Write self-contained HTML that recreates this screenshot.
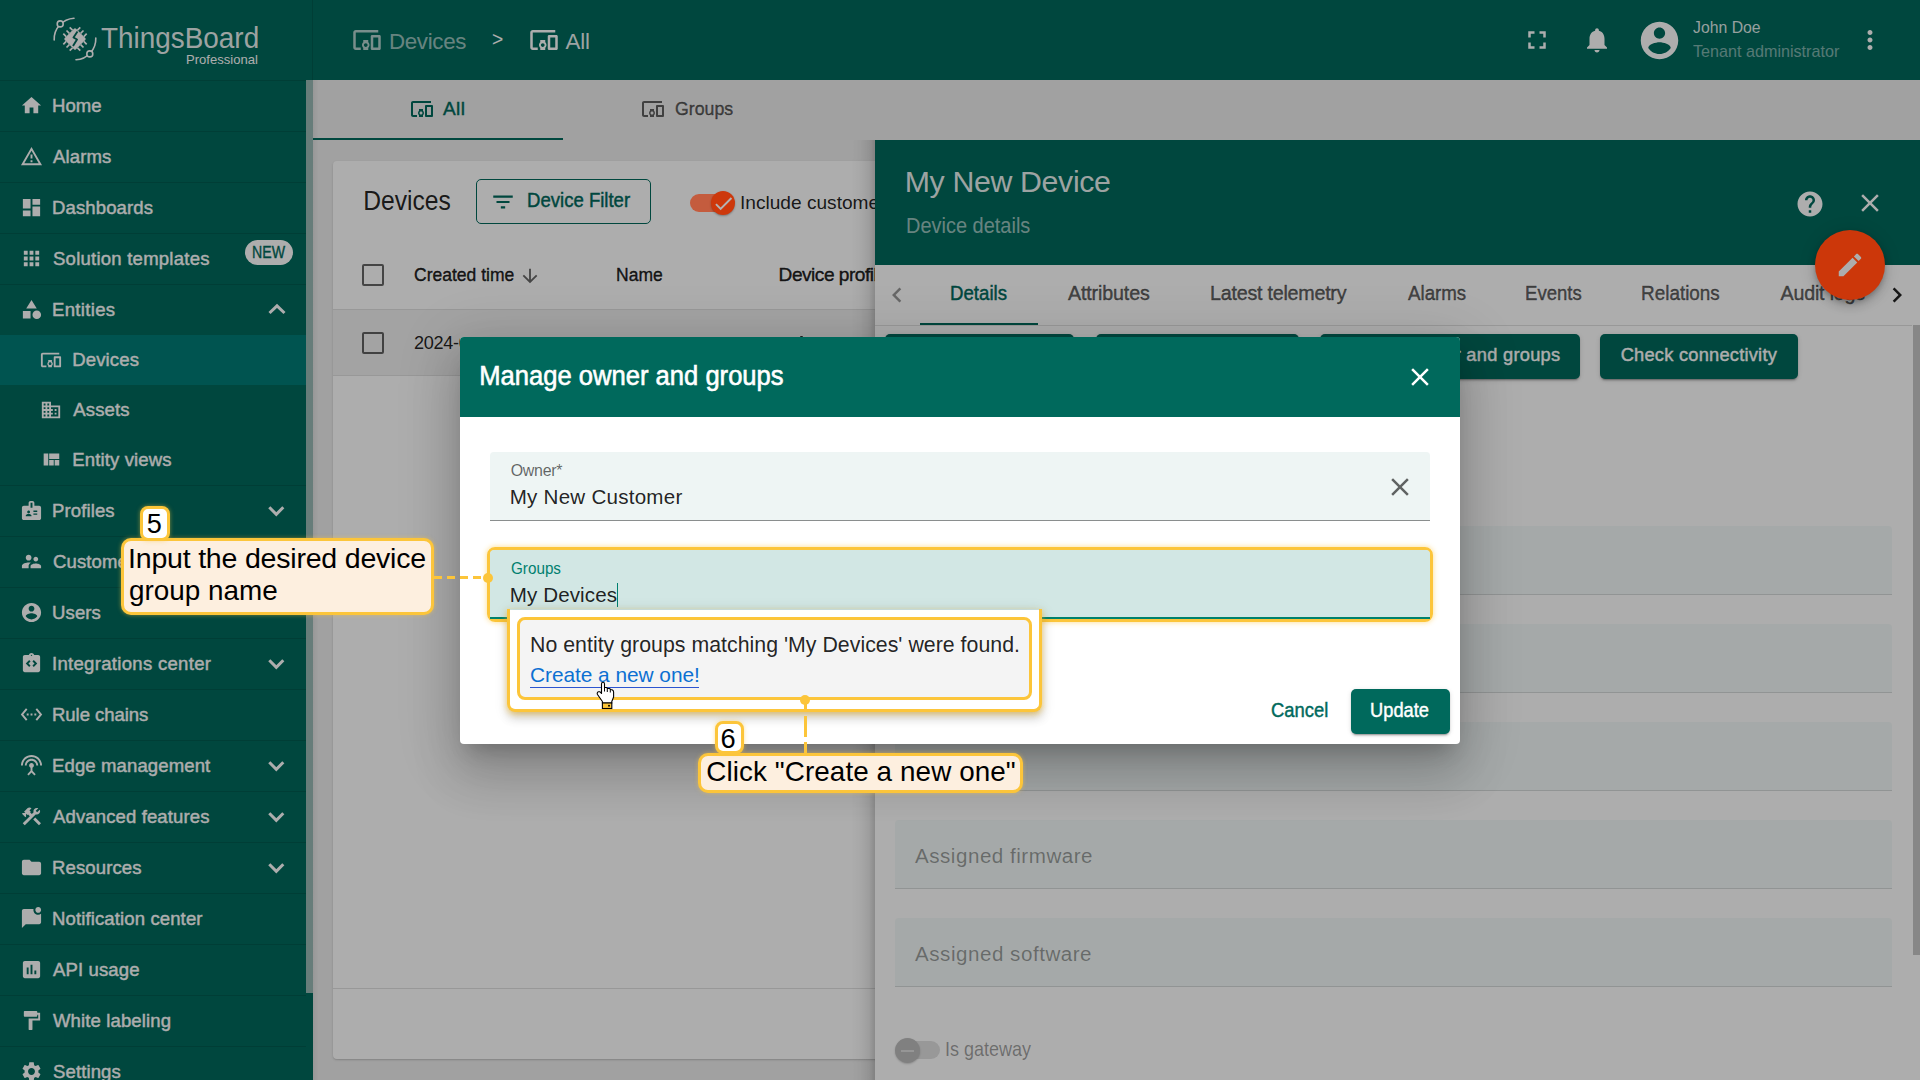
<!DOCTYPE html>
<html><head><meta charset="utf-8">
<style>
*{box-sizing:border-box;margin:0;padding:0}
html,body{width:1920px;height:1080px;overflow:hidden;background:#eeeeee;font-family:"Liberation Sans",sans-serif;position:relative}
.a{position:absolute}
svg{position:absolute;display:block;overflow:visible}
.t{position:absolute;white-space:nowrap;line-height:1}
</style></head><body>
<div class="a" style="left:0px;top:0px;width:1920px;height:80px;background:#00695c"></div>
<svg style="left:0;top:0;width:120px;height:80px" viewBox="0 0 120 80">
<g fill="none" stroke="#fff" stroke-width="1.6" stroke-linecap="round">
<path d="M54.2 40 A21 21 0 0 1 74 18.2"/>
<path d="M95.8 38 A21 21 0 0 1 76 59.8"/>
<circle cx="60.2" cy="23.9" r="3" fill="#00695c"/><circle cx="89.8" cy="53.9" r="3" fill="#00695c"/>
</g>
<g transform="rotate(45 75 39)">
<rect x="67" y="31" width="16" height="16" rx="1.5" fill="#fff"/>
<g stroke="#fff" stroke-width="1.7"><path d="M70.5 27v4M75 27v4M79.5 27v4M70.5 47v4M75 47v4M79.5 47v4M63 34.5h4M63 39h4M63 43.5h4M83 34.5h4M83 39h4M83 43.5h4"/></g>
</g>
<path d="M77.5 31.5 L73.5 37.5 L77 39.5 L73 46" stroke="#00695c" stroke-width="1.9" fill="none" stroke-linejoin="round"/>
</svg>
<div class="t" style="left:101.00px;top:23.66px;font-size:28.99px;color:rgba(255,255,255,0.92);font-weight:400;letter-spacing:0.000px;transform:scaleX(0.9624);transform-origin:0.00px 0;">ThingsBoard</div>
<div class="t" style="left:186.00px;top:52.66px;font-size:13.04px;color:#ffffff;font-weight:400;letter-spacing:0.017px;">Professional</div>
<svg style="left:352.00px;top:25.20px;width:30px;height:30px;" viewBox="0 0 24 24"><path fill="rgba(255,255,255,0.7)" d="M3 6h18V4H3c-1.1 0-2 .9-2 2v12c0 1.1.9 2 2 2h4v-2H3V6zm10 6H9v1.78c-.61.55-1 1.33-1 2.22s.39 1.67 1 2.22V20h4v-1.78c.61-.55 1-1.34 1-2.22s-.39-1.67-1-2.22V12zm-2 5.5c-.83 0-1.5-.67-1.5-1.5s.67-1.5 1.5-1.5 1.5.67 1.5 1.5-.67 1.5-1.5 1.5zM22 8h-6c-.5 0-1 .5-1 1v10c0 .5.5 1 1 1h6c.5 0 1-.5 1-1V9c0-.5-.5-1-1-1zm-1 10h-4v-8h4v8z"/></svg>
<div class="t" style="left:389.00px;top:31.41px;font-size:22.32px;color:rgba(255,255,255,0.62);font-weight:400;letter-spacing:-0.326px;">Devices</div>
<div class="t" style="left:492.40px;top:28.41px;font-size:21.01px;color:#ffffff;font-weight:400;letter-spacing:0.000px;transform:scaleX(0.9182);transform-origin:1.00px 0;">&gt;</div>
<svg style="left:529.00px;top:25.20px;width:30px;height:30px;" viewBox="0 0 24 24"><path fill="#ffffff" d="M3 6h18V4H3c-1.1 0-2 .9-2 2v12c0 1.1.9 2 2 2h4v-2H3V6zm10 6H9v1.78c-.61.55-1 1.33-1 2.22s.39 1.67 1 2.22V20h4v-1.78c.61-.55 1-1.34 1-2.22s-.39-1.67-1-2.22V12zm-2 5.5c-.83 0-1.5-.67-1.5-1.5s.67-1.5 1.5-1.5 1.5.67 1.5 1.5-.67 1.5-1.5 1.5zM22 8h-6c-.5 0-1 .5-1 1v10c0 .5.5 1 1 1h6c.5 0 1-.5 1-1V9c0-.5-.5-1-1-1zm-1 10h-4v-8h4v8z"/></svg>
<div class="t" style="left:565.40px;top:31.41px;font-size:22.32px;color:rgba(255,255,255,0.92);font-weight:400;letter-spacing:-0.063px;">All</div>
<svg style="left:1522.00px;top:25.00px;width:30px;height:30px;" viewBox="0 0 24 24"><path fill="#ffffff" d="M7 14H5v5h5v-2H7v-3zm-2-4h2V7h3V5H5v5zm12 7h-3v2h5v-5h-2v3zM14 5v2h3v3h2V5h-5z"/></svg>
<svg style="left:1582.00px;top:25.00px;width:30px;height:30px;" viewBox="0 0 24 24"><path fill="#ffffff" d="M12 22c1.1 0 2-.9 2-2h-4c0 1.1.89 2 2 2zm6-6v-5c0-3.07-1.64-5.64-4.5-6.32V4c0-.83-.67-1.5-1.5-1.5s-1.5.67-1.5 1.5v.68C7.63 5.36 6 7.92 6 11v5l-2 2v1h16v-1l-2-2z"/></svg>
<svg style="left:1637.00px;top:18.00px;width:45px;height:45px;" viewBox="0 0 24 24"><path fill="#ffffff" d="M12 2C6.48 2 2 6.48 2 12s4.48 10 10 10 10-4.48 10-10S17.52 2 12 2zm0 3c1.66 0 3 1.34 3 3s-1.34 3-3 3-3-1.34-3-3 1.34-3 3-3zm0 14.2c-2.5 0-4.71-1.28-6-3.22.03-1.99 4-3.08 6-3.08 1.99 0 5.97 1.09 6 3.08-1.29 1.94-3.5 3.22-6 3.22z"/></svg>
<div class="t" style="left:1693.00px;top:18.98px;font-size:17.39px;color:rgba(255,255,255,0.88);font-weight:400;letter-spacing:0.000px;transform:scaleX(0.9089);transform-origin:0.00px 0;">John Doe</div>
<div class="t" style="left:1693.00px;top:42.98px;font-size:17.39px;color:rgba(255,255,255,0.5);font-weight:400;letter-spacing:0.000px;transform:scaleX(0.9294);transform-origin:0.00px 0;">Tenant administrator</div>
<svg style="left:1855.00px;top:25.00px;width:30px;height:30px;" viewBox="0 0 24 24"><path fill="#ffffff" d="M12 8c1.1 0 2-.9 2-2s-.9-2-2-2-2 .9-2 2 .9 2 2 2zm0 2c-1.1 0-2 .9-2 2s.9 2 2 2 2-.9 2-2-.9-2-2-2zm0 6c-1.1 0-2 .9-2 2s.9 2 2 2 2-.9 2-2-.9-2-2-2z"/></svg>
<div class="a" style="left:0px;top:80px;width:313px;height:1000px;background:#00695c"></div>
<div class="a" style="left:306px;top:80px;width:7px;height:913px;background:#99b8b4"></div>
<div class="a" style="left:0px;top:80px;width:306px;height:1px;background:rgba(0,0,0,0.12)"></div>
<div class="a" style="left:312px;top:0px;width:1px;height:80px;background:rgba(0,0,0,0.12)"></div>
<svg style="left:19.50px;top:94.00px;width:23px;height:23px;" viewBox="0 0 24 24"><path fill="#ffffff" d="M10 20v-6h4v6h5v-8h3L12 3 2 12h3v8z"/></svg>
<div class="t" style="left:52.00px;top:96.90px;font-size:18.55px;color:#ffffff;font-weight:400;letter-spacing:0.014px;-webkit-text-stroke:0.41px #ffffff;">Home</div>
<div class="a" style="left:0px;top:131px;width:306px;height:1px;background:rgba(0,0,0,0.12)"></div>
<svg style="left:19.50px;top:145.00px;width:23px;height:23px;" viewBox="0 0 24 24"><path fill="#ffffff" d="M12 5.99L19.53 19H4.47L12 5.99M12 2L1 21h22L12 2zm1 14h-2v2h2v-2zm0-6h-2v4h2v-4z"/></svg>
<div class="t" style="left:53.00px;top:147.90px;font-size:18.55px;color:#ffffff;font-weight:400;letter-spacing:0.114px;-webkit-text-stroke:0.41px #ffffff;">Alarms</div>
<div class="a" style="left:0px;top:182px;width:306px;height:1px;background:rgba(0,0,0,0.12)"></div>
<svg style="left:19.50px;top:196.00px;width:23px;height:23px;" viewBox="0 0 24 24"><path fill="#ffffff" d="M3 13h8V3H3v10zm0 8h8v-6H3v6zm10 0h8V11h-8v10zm0-18v6h8V3h-8z"/></svg>
<div class="t" style="left:52.00px;top:198.90px;font-size:18.55px;color:#ffffff;font-weight:400;letter-spacing:0.120px;-webkit-text-stroke:0.41px #ffffff;">Dashboards</div>
<div class="a" style="left:0px;top:233px;width:306px;height:1px;background:rgba(0,0,0,0.12)"></div>
<svg style="left:19.50px;top:247.00px;width:23px;height:23px;" viewBox="0 0 24 24"><path fill="#ffffff" d="M4 8h4V4H4v4zm6 12h4v-4h-4v4zm-6 0h4v-4H4v4zm0-6h4v-4H4v4zm6 0h4v-4h-4v4zm6-10v4h4V4h-4zm-6 4h4V4h-4v4zm6 6h4v-4h-4v4zm0 6h4v-4h-4v4z"/></svg>
<div class="t" style="left:53.00px;top:249.90px;font-size:18.55px;color:#ffffff;font-weight:400;letter-spacing:0.235px;-webkit-text-stroke:0.41px #ffffff;">Solution templates</div>
<div class="a" style="left:0px;top:284px;width:306px;height:1px;background:rgba(0,0,0,0.12)"></div>
<svg style="left:19.50px;top:298.00px;width:23px;height:23px;" viewBox="0 0 24 24"><path fill="#ffffff" d="M12 2l-5.5 9h11zM17.5 13a4.5 4.5 0 1 0 0 9a4.5 4.5 0 1 0 0-9zM3 13.5h8v8H3z"/></svg>
<div class="t" style="left:52.00px;top:300.90px;font-size:18.55px;color:#ffffff;font-weight:400;letter-spacing:0.336px;-webkit-text-stroke:0.41px #ffffff;">Entities</div>
<svg style="left:260px;top:284px;width:40px;height:50px" viewBox="0 0 40 50"><polyline points="9.5,29 17,21.8 24.5,29" fill="none" stroke="#fff" stroke-width="3"/></svg>
<div class="a" style="left:245px;top:240px;width:48px;height:25px;border-radius:12.5px;background:#fff"></div>
<div class="t" style="left:251.50px;top:244.51px;font-size:15.94px;color:#00695c;font-weight:400;letter-spacing:0.000px;transform:scaleX(0.8855);transform-origin:1.00px 0;-webkit-text-stroke:0.35px #00695c;">NEW</div>
<div class="a" style="left:0px;top:335px;width:306px;height:50px;background:#007c76"></div>
<svg style="left:40.00px;top:349.00px;width:22px;height:22px;" viewBox="0 0 24 24"><path fill="#ffffff" d="M3 6h18V4H3c-1.1 0-2 .9-2 2v12c0 1.1.9 2 2 2h4v-2H3V6zm10 6H9v1.78c-.61.55-1 1.33-1 2.22s.39 1.67 1 2.22V20h4v-1.78c.61-.55 1-1.34 1-2.22s-.39-1.67-1-2.22V12zm-2 5.5c-.83 0-1.5-.67-1.5-1.5s.67-1.5 1.5-1.5 1.5.67 1.5 1.5-.67 1.5-1.5 1.5zM22 8h-6c-.5 0-1 .5-1 1v10c0 .5.5 1 1 1h6c.5 0 1-.5 1-1V9c0-.5-.5-1-1-1zm-1 10h-4v-8h4v8z"/></svg>
<div class="t" style="left:72.30px;top:351.00px;font-size:18.55px;color:#ffffff;font-weight:400;letter-spacing:0.120px;-webkit-text-stroke:0.41px #ffffff;">Devices</div>
<svg style="left:40.00px;top:399.00px;width:22px;height:22px;" viewBox="0 0 24 24"><path fill="#ffffff" d="M12 7V3H2v18h20V7H12zM6 19H4v-2h2v2zm0-4H4v-2h2v2zm0-4H4V9h2v2zm0-4H4V5h2v2zm4 12H8v-2h2v2zm0-4H8v-2h2v2zm0-4H8V9h2v2zm0-4H8V5h2v2zm10 12h-8v-2h2v-2h-2v-2h2v-2h-2V9h8v10zm-2-8h-2v2h2v-2zm0 4h-2v2h2v-2z"/></svg>
<div class="t" style="left:73.30px;top:401.00px;font-size:18.55px;color:#ffffff;font-weight:400;letter-spacing:0.120px;-webkit-text-stroke:0.41px #ffffff;">Assets</div>
<svg style="left:40.00px;top:449.00px;width:22px;height:22px;" viewBox="0 0 24 24"><path fill="#ffffff" d="M10 18h5v-6h-5v6zm-6 0h5V5H4v13zm12 0h5v-6h-5v6zM10 5v6h11V5H10z"/></svg>
<div class="t" style="left:72.30px;top:451.00px;font-size:18.55px;color:#ffffff;font-weight:400;letter-spacing:0.120px;-webkit-text-stroke:0.41px #ffffff;">Entity views</div>
<div class="a" style="left:0px;top:485px;width:306px;height:1px;background:rgba(0,0,0,0.12)"></div>
<svg style="left:19.50px;top:499.00px;width:23px;height:23px;" viewBox="0 0 24 24"><path fill="#ffffff" d="M20 7h-5V4c0-1.1-.9-2-2-2h-2c-1.1 0-2 .9-2 2v3H4c-1.1 0-2 .9-2 2v11c0 1.1.9 2 2 2h16c1.1 0 2-.9 2-2V9c0-1.1-.9-2-2-2zM9 12c.83 0 1.5.67 1.5 1.5S9.830 15 9 15s-1.5-.67-1.5-1.5S8.17 12 9 12zm3 6H6v-.43c0-.6.36-1.15.92-1.39.64-.28 1.34-.43 2.08-.43s1.44.15 2.08.43c.55.24.92.78.92 1.39V18zm1-9h-2V4h2v5zm5 7.5h-4V15h4v1.5zm0-3h-4V12h4v1.5z"/></svg>
<div class="t" style="left:52.00px;top:501.90px;font-size:18.55px;color:#ffffff;font-weight:400;letter-spacing:0.120px;-webkit-text-stroke:0.41px #ffffff;">Profiles</div>
<svg style="left:260px;top:485px;width:40px;height:50px" viewBox="0 0 40 50"><polyline points="9.3,22.3 16.3,29.3 23.3,22.3" fill="none" stroke="#fff" stroke-width="3"/></svg>
<div class="a" style="left:0px;top:536px;width:306px;height:1px;background:rgba(0,0,0,0.12)"></div>
<svg style="left:19.50px;top:550.00px;width:23px;height:23px;" viewBox="0 0 24 24"><path fill="#ffffff" d="M16.5 12c1.38 0 2.49-1.12 2.49-2.5S17.88 7 16.5 7C15.12 7 14 8.12 14 9.5s1.12 2.5 2.5 2.5zM9 11c1.66 0 2.99-1.34 2.99-3S10.66 5 9 5C7.34 5 6 6.34 6 8s1.34 3 3 3zm7.5 3c-1.83 0-5.5.92-5.5 2.75V19h11v-2.25c0-1.83-3.67-2.75-5.5-2.75zM9 13c-2.33 0-7 1.17-7 3.5V19h7v-2.25c0-.85.33-2.34 2.37-3.47C10.5 13.1 9.66 13 9 13z"/></svg>
<div class="t" style="left:53.00px;top:552.90px;font-size:18.55px;color:#ffffff;font-weight:400;letter-spacing:0.120px;-webkit-text-stroke:0.41px #ffffff;">Customers</div>
<div class="a" style="left:0px;top:587px;width:306px;height:1px;background:rgba(0,0,0,0.12)"></div>
<svg style="left:19.50px;top:601.00px;width:23px;height:23px;" viewBox="0 0 24 24"><path fill="#ffffff" d="M12 2C6.48 2 2 6.48 2 12s4.48 10 10 10 10-4.48 10-10S17.52 2 12 2zm0 3c1.66 0 3 1.34 3 3s-1.34 3-3 3-3-1.34-3-3 1.34-3 3-3zm0 14.2c-2.5 0-4.71-1.28-6-3.22.03-1.99 4-3.08 6-3.08 1.99 0 5.97 1.09 6 3.08-1.29 1.94-3.5 3.22-6 3.22z"/></svg>
<div class="t" style="left:52.00px;top:603.90px;font-size:18.55px;color:#ffffff;font-weight:400;letter-spacing:0.120px;-webkit-text-stroke:0.41px #ffffff;">Users</div>
<div class="a" style="left:0px;top:638px;width:306px;height:1px;background:rgba(0,0,0,0.12)"></div>
<svg style="left:19.50px;top:652.00px;width:23px;height:23px;" viewBox="0 0 24 24"><path fill="#ffffff" d="M19 3h-4.18C14.4 1.84 13.3 1 12 1c-1.3 0-2.4.84-2.82 2H5c-1.1 0-2 .9-2 2v14c0 1.1.9 2 2 2h14c1.1 0 2-.9 2-2V5c0-1.1-.9-2-2-2zm-8 11.17l-1.41 1.42L6 12l3.59-3.59L11 9.830 8.83 12 11 14.17zm1-9.92c-.41 0-.75-.34-.75-.75s.34-.75.75-.75.75.34.75.75-.34.75-.75.75zm2.41 11.34L13 14.17 15.17 12 13 9.83l1.41-1.42L18 12l-3.59 3.590z"/></svg>
<div class="t" style="left:52.00px;top:654.90px;font-size:18.55px;color:#ffffff;font-weight:400;letter-spacing:0.303px;-webkit-text-stroke:0.41px #ffffff;">Integrations center</div>
<svg style="left:260px;top:638px;width:40px;height:50px" viewBox="0 0 40 50"><polyline points="9.3,22.3 16.3,29.3 23.3,22.3" fill="none" stroke="#fff" stroke-width="3"/></svg>
<div class="a" style="left:0px;top:689px;width:306px;height:1px;background:rgba(0,0,0,0.12)"></div>
<svg style="left:19.50px;top:703.00px;width:23px;height:23px;" viewBox="0 0 24 24"><path fill="#ffffff" d="M7.77 6.76L6.23 5.48.82 12l5.41 6.52 1.54-1.28L3.42 12l4.35-5.24zM7 13h2v-2H7v2zm10-2h-2v2h2v-2zm-6 2h2v-2h-2v2zm6.77-7.52l-1.54 1.28L20.58 12l-4.35 5.24 1.54 1.28L23.18 12l-5.41-6.52z"/></svg>
<div class="t" style="left:52.00px;top:705.90px;font-size:18.55px;color:#ffffff;font-weight:400;letter-spacing:-0.044px;-webkit-text-stroke:0.41px #ffffff;">Rule chains</div>
<div class="a" style="left:0px;top:740px;width:306px;height:1px;background:rgba(0,0,0,0.12)"></div>
<svg style="left:19.50px;top:754.00px;width:23px;height:23px;" viewBox="0 0 24 24"><path fill="#ffffff" d="M12 5c-3.87 0-7 3.13-7 7h2c0-2.76 2.24-5 5-5s5 2.24 5 5h2c0-3.87-3.13-7-7-7zm1 9.29c.88-.39 1.5-1.26 1.5-2.29 0-1.38-1.12-2.5-2.5-2.5S9.5 10.62 9.5 12c0 1.02.62 1.9 1.5 2.29v3.3L7.59 21 9 22.41l3-3 3 3L16.41 21 13 17.59v-3.3zM12 1C5.93 1 1 5.93 1 12h2c0-4.97 4.030-9 9-9s9 4.03 9 9h2c0-6.07-4.93-11-11-11z"/></svg>
<div class="t" style="left:52.00px;top:756.90px;font-size:18.55px;color:#ffffff;font-weight:400;letter-spacing:0.120px;-webkit-text-stroke:0.41px #ffffff;">Edge management</div>
<svg style="left:260px;top:740px;width:40px;height:50px" viewBox="0 0 40 50"><polyline points="9.3,22.3 16.3,29.3 23.3,22.3" fill="none" stroke="#fff" stroke-width="3"/></svg>
<div class="a" style="left:0px;top:791px;width:306px;height:1px;background:rgba(0,0,0,0.12)"></div>
<svg style="left:19.50px;top:805.00px;width:23px;height:23px;" viewBox="0 0 24 24"><path fill="#ffffff" d="M13.783 15.172l2.121-2.121 5.996 5.996-2.121 2.121zM17.5 10c1.93 0 3.5-1.57 3.5-3.5 0-.58-.16-1.12-.41-1.6l-2.7 2.7-1.49-1.49 2.7-2.7c-.48-.25-1.02-.41-1.6-.41C15.57 3 14 4.57 14 6.5c0 .41.08.8.21 1.16l-1.85 1.85-1.78-1.78.71-.71-1.41-1.41L12 3.49c-1.17-1.17-3.07-1.17-4.24 0L4.22 7.03l1.41 1.41H2.81l-.71.71 3.54 3.54.71-.71V9.15l1.41 1.41.71-.71 1.78 1.78-7.41 7.41 2.12 2.12L16.34 9.79c.36.13.75.21 1.16.21z"/></svg>
<div class="t" style="left:53.00px;top:807.90px;font-size:18.55px;color:#ffffff;font-weight:400;letter-spacing:0.120px;-webkit-text-stroke:0.41px #ffffff;">Advanced features</div>
<svg style="left:260px;top:791px;width:40px;height:50px" viewBox="0 0 40 50"><polyline points="9.3,22.3 16.3,29.3 23.3,22.3" fill="none" stroke="#fff" stroke-width="3"/></svg>
<div class="a" style="left:0px;top:842px;width:306px;height:1px;background:rgba(0,0,0,0.12)"></div>
<svg style="left:19.50px;top:856.00px;width:23px;height:23px;" viewBox="0 0 24 24"><path fill="#ffffff" d="M10 4H4c-1.1 0-1.99.9-1.99 2L2 18c0 1.1.9 2 2 2h16c1.1 0 2-.9 2-2V8c0-1.1-.9-2-2-2h-8l-2-2z"/></svg>
<div class="t" style="left:52.00px;top:858.90px;font-size:18.55px;color:#ffffff;font-weight:400;letter-spacing:0.120px;-webkit-text-stroke:0.41px #ffffff;">Resources</div>
<svg style="left:260px;top:842px;width:40px;height:50px" viewBox="0 0 40 50"><polyline points="9.3,22.3 16.3,29.3 23.3,22.3" fill="none" stroke="#fff" stroke-width="3"/></svg>
<div class="a" style="left:0px;top:893px;width:306px;height:1px;background:rgba(0,0,0,0.12)"></div>
<svg style="left:19.50px;top:907.00px;width:23px;height:23px;" viewBox="0 0 24 24"><path fill="#ffffff" d="M22 6.98V16c0 1.1-.9 2-2 2H6l-4 4V4c0-1.1.9-2 2-2h10.1c-.06.32-.1.66-.1 1 0 2.76 2.24 5 5 5 1.13 0 2.16-.39 3-1.02zM16 3c0 1.66 1.34 3 3 3s3-1.34 3-3-1.34-3-3-3-3 1.34-3 3z"/></svg>
<div class="t" style="left:52.00px;top:909.90px;font-size:18.55px;color:#ffffff;font-weight:400;letter-spacing:0.120px;-webkit-text-stroke:0.41px #ffffff;">Notification center</div>
<div class="a" style="left:0px;top:944px;width:306px;height:1px;background:rgba(0,0,0,0.12)"></div>
<svg style="left:19.50px;top:958.00px;width:23px;height:23px;" viewBox="0 0 24 24"><path fill="#ffffff" d="M19 3H5c-1.1 0-2 .9-2 2v14c0 1.1.9 2 2 2h14c1.1 0 2-.9 2-2V5c0-1.1-.9-2-2-2zM9 17H7v-7h2v7zm4 0h-2V7h2v10zm4 0h-2v-4h2v4z"/></svg>
<div class="t" style="left:53.00px;top:960.90px;font-size:18.55px;color:#ffffff;font-weight:400;letter-spacing:0.120px;-webkit-text-stroke:0.41px #ffffff;">API usage</div>
<div class="a" style="left:0px;top:995px;width:306px;height:1px;background:rgba(0,0,0,0.12)"></div>
<svg style="left:19.50px;top:1009.00px;width:23px;height:23px;" viewBox="0 0 24 24"><path fill="#ffffff" d="M18 4V3c0-.55-.45-1-1-1H5c-.55 0-1 .45-1 1v4c0 .55.45 1 1 1h12c.55 0 1-.45 1-1V6h1v4H9v11c0 .55.45 1 1 1h2c.55 0 1-.45 1-1v-9h8V4h-3z"/></svg>
<div class="t" style="left:53.00px;top:1011.90px;font-size:18.55px;color:#ffffff;font-weight:400;letter-spacing:0.120px;-webkit-text-stroke:0.41px #ffffff;">White labeling</div>
<div class="a" style="left:0px;top:1046px;width:306px;height:1px;background:rgba(0,0,0,0.12)"></div>
<svg style="left:19.50px;top:1060.00px;width:23px;height:23px;" viewBox="0 0 24 24"><path fill="#ffffff" d="M19.14 12.94c.04-.3.06-.61.06-.94 0-.32-.02-.64-.07-.94l2.03-1.58c.18-.14.23-.41.12-.61l-1.92-3.32c-.12-.22-.37-.29-.59-.22l-2.39.96c-.5-.38-1.03-.7-1.62-.94l-.36-2.54c-.04-.24-.24-.41-.48-.41h-3.84c-.24 0-.43.17-.47.41l-.36 2.54c-.59.24-1.13.57-1.62.94l-2.39-.96c-.22-.08-.47 0-.59.22L2.74 8.87c-.12.21-.08.47.12.61l2.03 1.58c-.05.3-.09.63-.09.94s.02.64.07.94l-2.03 1.58c-.18.14-.23.41-.12.61l1.92 3.32c.12.22.37.29.59.22l2.39-.96c.5.38 1.03.7 1.62.94l.36 2.54c.05.24.24.41.48.41h3.84c.24 0 .44-.17.47-.41l.36-2.54c.59-.24 1.13-.56 1.62-.94l2.39.96c.22.08.47 0 .59-.22l1.92-3.32c.12-.22.07-.47-.12-.61l-2.01-1.58zM12 15.6c-1.98 0-3.6-1.62-3.6-3.6s1.62-3.6 3.6-3.6 3.6 1.62 3.6 3.6-1.62 3.6-3.6 3.6z"/></svg>
<div class="t" style="left:53.00px;top:1062.90px;font-size:18.55px;color:#ffffff;font-weight:400;letter-spacing:0.120px;-webkit-text-stroke:0.41px #ffffff;">Settings</div>
<div class="a" style="left:313px;top:80px;width:1607px;height:1000px;background:#eeeeee"></div>
<div class="a" style="left:313px;top:80px;width:6px;height:1000px;background:linear-gradient(90deg,rgba(0,0,0,0.06),rgba(0,0,0,0))"></div>
<div class="a" style="left:313px;top:138px;width:250px;height:2px;background:#00695c"></div>
<svg style="left:409.50px;top:97.00px;width:24px;height:24px;" viewBox="0 0 24 24"><path fill="#00695c" d="M3 6h18V4H3c-1.1 0-2 .9-2 2v12c0 1.1.9 2 2 2h4v-2H3V6zm10 6H9v1.78c-.61.55-1 1.33-1 2.22s.39 1.67 1 2.22V20h4v-1.78c.61-.55 1-1.34 1-2.22s-.39-1.67-1-2.22V12zm-2 5.5c-.83 0-1.5-.67-1.5-1.5s.67-1.5 1.5-1.5 1.5.67 1.5 1.5-.67 1.5-1.5 1.5zM22 8h-6c-.5 0-1 .5-1 1v10c0 .5.5 1 1 1h6c.5 0 1-.5 1-1V9c0-.5-.5-1-1-1zm-1 10h-4v-8h4v8z"/></svg>
<div class="t" style="left:443.00px;top:98.93px;font-size:18.99px;color:#00695c;font-weight:400;letter-spacing:0.417px;-webkit-text-stroke:0.42px #00695c;">All</div>
<svg style="left:640.50px;top:97.00px;width:24px;height:24px;" viewBox="0 0 24 24"><path fill="rgba(0,0,0,0.6)" d="M3 6h18V4H3c-1.1 0-2 .9-2 2v12c0 1.1.9 2 2 2h4v-2H3V6zm10 6H9v1.78c-.61.55-1 1.33-1 2.22s.39 1.67 1 2.22V20h4v-1.78c.61-.55 1-1.34 1-2.22s-.39-1.67-1-2.22V12zm-2 5.5c-.83 0-1.5-.67-1.5-1.5s.67-1.5 1.5-1.5 1.5.67 1.5 1.5-.67 1.5-1.5 1.5zM22 8h-6c-.5 0-1 .5-1 1v10c0 .5.5 1 1 1h6c.5 0 1-.5 1-1V9c0-.5-.5-1-1-1zm-1 10h-4v-8h4v8z"/></svg>
<div class="t" style="left:674.50px;top:98.93px;font-size:18.99px;color:rgba(0,0,0,0.6);font-weight:400;letter-spacing:0.000px;transform:scaleX(0.9349);transform-origin:0.00px 0;-webkit-text-stroke:0.42px rgba(0,0,0,0.6);">Groups</div>
<div class="a" style="left:333px;top:161px;width:1567px;height:898px;background:#fff;border-radius:4px;box-shadow:0 1px 3px rgba(0,0,0,0.12),0 1px 1px rgba(0,0,0,.08)"></div>
<div class="t" style="left:362.90px;top:187.58px;font-size:26.96px;color:rgba(0,0,0,0.87);font-weight:400;letter-spacing:0.000px;transform:scaleX(0.9150);transform-origin:2.00px 0;">Devices</div>
<div class="a" style="left:476px;top:179px;width:175px;height:45px;border:1.5px solid #00695c;border-radius:5px"></div>
<svg style="left:490.00px;top:189.00px;width:26px;height:26px;" viewBox="0 0 24 24"><path fill="#00695c" d="M10 18h4v-2h-4v2zM3 6v2h18V6H3zm3 7h12v-2H6v2z"/></svg>
<div class="t" style="left:526.70px;top:190.96px;font-size:19.42px;color:#00695c;font-weight:400;letter-spacing:0.000px;transform:scaleX(0.9556);transform-origin:1.00px 0;-webkit-text-stroke:0.43px #00695c;">Device Filter</div>
<div class="t" style="left:740.00px;top:192.51px;font-size:19.13px;color:rgba(0,0,0,0.87);font-weight:400;letter-spacing:0.000px;">Include customer devices</div>
<div class="a" style="left:362px;top:264px;width:22px;height:22px;border:2px solid rgba(0,0,0,0.6);border-radius:2px"></div>
<div class="t" style="left:414.00px;top:265.01px;font-size:19.13px;color:rgba(0,0,0,0.87);font-weight:400;letter-spacing:0.000px;transform:scaleX(0.9160);transform-origin:0.00px 0;-webkit-text-stroke:0.42px rgba(0,0,0,0.87);">Created time</div>
<svg style="left:519.00px;top:265.00px;width:22px;height:22px;" viewBox="0 0 24 24"><path fill="rgba(0,0,0,0.6)" d="M20 12l-1.41-1.41L13 16.17V4h-2v12.17l-5.58-5.59L4 12l8 8 8-8z"/></svg>
<div class="t" style="left:615.60px;top:265.01px;font-size:19.13px;color:rgba(0,0,0,0.87);font-weight:400;letter-spacing:0.000px;transform:scaleX(0.9154);transform-origin:1.00px 0;-webkit-text-stroke:0.42px rgba(0,0,0,0.87);">Name</div>
<div class="t" style="left:778.60px;top:265.01px;font-size:19.13px;color:rgba(0,0,0,0.87);font-weight:400;letter-spacing:-0.500px;-webkit-text-stroke:0.42px rgba(0,0,0,0.87);">Device profile</div>
<div class="a" style="left:333px;top:309px;width:542px;height:1px;background:rgba(0,0,0,0.12)"></div>
<div class="a" style="left:333px;top:310px;width:542px;height:65px;background:#f0f0f0"></div>
<div class="a" style="left:333px;top:375px;width:542px;height:1px;background:rgba(0,0,0,0.12)"></div>
<div class="a" style="left:362px;top:332px;width:22px;height:22px;border:2px solid rgba(0,0,0,0.6);border-radius:2px"></div>
<div class="a" style="left:333px;top:320px;width:127px;height:40px;overflow:hidden"><div class="a" style="left:-333px;top:-320px;width:1920px;height:1080px">
<div class="t" style="left:414.00px;top:334.36px;font-size:18.12px;color:rgba(0,0,0,0.87);font-weight:400;letter-spacing:-0.300px;">2024-01-15 12:00:00</div>
</div></div>
<div class="a" style="left:333px;top:988px;width:542px;height:1px;background:rgba(0,0,0,0.12)"></div>
<div class="a" style="left:800px;top:335.5px;width:2.5px;height:2px;background:rgba(0,0,0,0.8);border-radius:1px"></div>
<div class="a" style="left:851px;top:140px;width:24px;height:940px;background:linear-gradient(90deg,rgba(0,0,0,0),rgba(0,0,0,0.03) 40%,rgba(0,0,0,0.09) 75%,rgba(0,0,0,0.2))"></div>
<div class="a" style="left:875px;top:140px;width:1045px;height:940px;background:#fff"></div>
<div class="a" style="left:875px;top:140px;width:1045px;height:125px;background:#00695c"></div>
<div class="t" style="left:904.70px;top:167.16px;font-size:30.29px;color:rgba(255,255,255,0.92);font-weight:400;letter-spacing:-0.341px;">My New Device</div>
<div class="t" style="left:905.70px;top:214.69px;font-size:21.16px;color:rgba(255,255,255,0.62);font-weight:400;letter-spacing:0.000px;transform:scaleX(0.9436);transform-origin:1.00px 0;">Device details</div>
<svg style="left:1794.50px;top:188.50px;width:30px;height:30px;" viewBox="0 0 24 24"><path fill="#ffffff" d="M12 2C6.48 2 2 6.48 2 12s4.48 10 10 10 10-4.48 10-10S17.52 2 12 2zm1 17h-2v-2h2v2zm2.07-7.75l-.9.92C13.45 12.9 13 13.5 13 15h-2v-.5c0-1.1.45-2.1 1.17-2.83l1.24-1.26c.37-.36.59-.86.59-1.41 0-1.1-.9-2-2-2s-2 .9-2 2H8c0-2.21 1.79-4 4-4s4 1.79 4 4c0 .88-.36 1.68-.93 2.25z"/></svg>
<svg style="left:1855.00px;top:188.00px;width:30px;height:30px;" viewBox="0 0 24 24"><path fill="#ffffff" d="M19 6.41L17.59 5 12 10.59 6.41 5 5 6.41 10.59 12 5 17.59 6.41 19 12 13.41 17.59 19 19 17.59 13.41 12z"/></svg>
<div class="a" style="left:875px;top:325px;width:1037px;height:1px;background:rgba(0,0,0,0.12)"></div>
<svg style="left:882.00px;top:280.00px;width:30px;height:30px;" viewBox="0 0 24 24"><path fill="rgba(0,0,0,0.4)" d="M15.41 7.41L14 6l-6 6 6 6 1.41-1.41L10.83 12z"/></svg>
<div class="a" style="left:920px;top:323px;width:118px;height:2px;background:#00695c"></div>
<div class="t" style="left:949.80px;top:283.92px;font-size:19.71px;color:#00695c;font-weight:400;letter-spacing:0.000px;transform:scaleX(0.9465);transform-origin:1.00px 0;-webkit-text-stroke:0.43px #00695c;">Details</div>
<div class="t" style="left:1068.00px;top:283.92px;font-size:19.71px;color:rgba(0,0,0,0.6);font-weight:400;letter-spacing:-0.153px;-webkit-text-stroke:0.43px rgba(0,0,0,0.6);">Attributes</div>
<div class="t" style="left:1210.00px;top:283.92px;font-size:19.71px;color:rgba(0,0,0,0.6);font-weight:400;letter-spacing:-0.235px;-webkit-text-stroke:0.43px rgba(0,0,0,0.6);">Latest telemetry</div>
<div class="t" style="left:1407.60px;top:283.92px;font-size:19.71px;color:rgba(0,0,0,0.6);font-weight:400;letter-spacing:0.000px;transform:scaleX(0.9503);transform-origin:0.00px 0;-webkit-text-stroke:0.43px rgba(0,0,0,0.6);">Alarms</div>
<div class="t" style="left:1525.00px;top:283.92px;font-size:19.71px;color:rgba(0,0,0,0.6);font-weight:400;letter-spacing:0.000px;transform:scaleX(0.9430);transform-origin:1.00px 0;-webkit-text-stroke:0.43px rgba(0,0,0,0.6);">Events</div>
<div class="t" style="left:1641.00px;top:283.92px;font-size:19.71px;color:rgba(0,0,0,0.6);font-weight:400;letter-spacing:0.000px;transform:scaleX(0.9595);transform-origin:1.00px 0;-webkit-text-stroke:0.43px rgba(0,0,0,0.6);">Relations</div>
<div class="t" style="left:1780.50px;top:283.92px;font-size:19.71px;color:rgba(0,0,0,0.6);font-weight:400;letter-spacing:-0.200px;-webkit-text-stroke:0.43px rgba(0,0,0,0.6);">Audit logs</div>
<div class="a" style="left:1888px;top:266px;width:24px;height:58px;background:#fff"></div>
<svg style="left:1882.00px;top:280.00px;width:30px;height:30px;" viewBox="0 0 24 24"><path fill="rgba(0,0,0,0.87)" d="M10 6L8.59 7.41 13.17 12l-4.58 4.59L10 18l6-6z"/></svg>
<div class="a" style="left:885px;top:334px;width:189px;height:45px;border-radius:5px;background:#00695c;box-shadow:0 3px 1px -2px rgba(0,0,0,.2),0 2px 2px 0 rgba(0,0,0,.14),0 1px 5px 0 rgba(0,0,0,.12)"></div>
<div class="a" style="left:1096px;top:334px;width:203px;height:45px;border-radius:5px;background:#00695c;box-shadow:0 3px 1px -2px rgba(0,0,0,.2),0 2px 2px 0 rgba(0,0,0,.14),0 1px 5px 0 rgba(0,0,0,.12)"></div>
<div class="a" style="left:1320px;top:334px;width:260px;height:45px;border-radius:5px;background:#00695c;box-shadow:0 3px 1px -2px rgba(0,0,0,.2),0 2px 2px 0 rgba(0,0,0,.14),0 1px 5px 0 rgba(0,0,0,.12)"></div>
<div class="a" style="left:1600px;top:334px;width:198px;height:45px;border-radius:5px;background:#00695c;box-shadow:0 3px 1px -2px rgba(0,0,0,.2),0 2px 2px 0 rgba(0,0,0,.14),0 1px 5px 0 rgba(0,0,0,.12)"></div>
<div class="t" style="left:1337.00px;top:346.24px;font-size:18.26px;color:#ffffff;font-weight:400;letter-spacing:0.273px;-webkit-text-stroke:0.40px #ffffff;">Manage owner and groups</div>
<div class="t" style="left:1620.70px;top:346.24px;font-size:18.26px;color:#ffffff;font-weight:400;letter-spacing:0.234px;-webkit-text-stroke:0.40px #ffffff;">Check connectivity</div>
<div class="a" style="left:895px;top:526px;width:997px;height:69px;background:#f4faf9;border-radius:4px 4px 0 0;border-bottom:1px solid rgba(0,0,0,0.12)"></div>
<div class="a" style="left:895px;top:624px;width:997px;height:69px;background:#f4faf9;border-radius:4px 4px 0 0;border-bottom:1px solid rgba(0,0,0,0.12)"></div>
<div class="a" style="left:895px;top:722px;width:997px;height:69px;background:#f4faf9;border-radius:4px 4px 0 0;border-bottom:1px solid rgba(0,0,0,0.12)"></div>
<div class="a" style="left:895px;top:820px;width:997px;height:69px;background:#f4faf9;border-radius:4px 4px 0 0;border-bottom:1px solid rgba(0,0,0,0.12)"></div>
<div class="t" style="left:915.00px;top:845.88px;font-size:20.58px;color:rgba(0,0,0,0.38);font-weight:400;letter-spacing:0.519px;">Assigned firmware</div>
<div class="a" style="left:895px;top:918px;width:997px;height:69px;background:#f4faf9;border-radius:4px 4px 0 0;border-bottom:1px solid rgba(0,0,0,0.12)"></div>
<div class="t" style="left:915.00px;top:943.88px;font-size:20.58px;color:rgba(0,0,0,0.38);font-weight:400;letter-spacing:0.526px;">Assigned software</div>
<div class="a" style="left:896px;top:1041px;width:44px;height:18px;border-radius:9px;background:rgba(0,0,0,0.12)"></div>
<div class="a" style="left:895px;top:1038px;width:25px;height:25px;border-radius:12.5px;background:#bdbdbd;box-shadow:0 1px 2px rgba(0,0,0,.2)"></div>
<div class="a" style="left:901px;top:1049.5px;width:13px;height:2px;background:rgba(255,255,255,0.5)"></div>
<div class="t" style="left:944.60px;top:1040.26px;font-size:19.42px;color:rgba(0,0,0,0.38);font-weight:400;letter-spacing:0.000px;transform:scaleX(0.9276);transform-origin:1.00px 0;">Is gateway</div>
<div class="a" style="left:1913px;top:325px;width:7px;height:630px;background:rgba(0,0,0,0.22)"></div>
<div class="a" style="left:0px;top:0px;width:1920px;height:1080px;background:rgba(0,0,0,0.32)"></div>
<div class="a" style="left:690px;top:194px;width:36px;height:18px;border-radius:9px;background:#c45c3e"></div>
<div class="a" style="left:711px;top:191px;width:24px;height:24px;border-radius:12px;background:#cd380c;box-shadow:0 1px 2px rgba(0,0,0,.3)"></div>
<svg style="left:711.70px;top:191.50px;width:23px;height:23px;" viewBox="0 0 24 24"><path fill="#b4b4b4" d="M9 16.17L4.83 12l-1.42 1.41L9 19 21 7l-1.41-1.41z"/></svg>
<div class="a" style="left:1815px;top:230px;width:70px;height:70px;border-radius:35px;background:#cc370a;box-shadow:0 3px 5px -1px rgba(0,0,0,.2),0 6px 10px 0 rgba(0,0,0,.14),0 1px 18px 0 rgba(0,0,0,.12)"></div>
<svg style="left:1835.00px;top:250.00px;width:30px;height:30px;" viewBox="0 0 24 24"><path fill="#adadad" d="M3 17.25V21h3.75L17.81 9.94l-3.75-3.75L3 17.25zM20.71 7.04c.39-.39.39-1.02 0-1.41l-2.34-2.34c-.39-.39-1.02-.39-1.41 0l-1.83 1.83 3.75 3.75 1.83-1.83z"/></svg>
<div class="a" style="left:460px;top:337px;width:1000px;height:407px;background:#fff;border-radius:4px;box-shadow:0 14px 19px -9px rgba(0,0,0,.2),0 30px 48px 4px rgba(0,0,0,.14),0 11px 58px 10px rgba(0,0,0,.12)"></div>
<div class="a" style="left:460px;top:337px;width:1000px;height:80px;background:#00695c;border-radius:4px 4px 0 0"></div>
<div class="t" style="left:479.20px;top:362.01px;font-size:27.39px;color:#ffffff;font-weight:400;letter-spacing:0.000px;transform:scaleX(0.9350);transform-origin:2.00px 0;-webkit-text-stroke:0.60px #ffffff;">Manage owner and groups</div>
<svg style="left:1405.00px;top:361.50px;width:30px;height:30px;" viewBox="0 0 24 24"><path fill="#ffffff" d="M19 6.41L17.59 5 12 10.59 6.41 5 5 6.41 10.59 12 5 17.59 6.41 19 12 13.41 17.59 19 19 17.59 13.41 12z"/></svg>
<div class="a" style="left:490px;top:452px;width:940px;height:69px;background:#eef5f4;border-radius:4px 4px 0 0;border-bottom:1px solid rgba(0,0,0,0.42)"></div>
<div class="t" style="left:510.70px;top:463.01px;font-size:15.94px;color:rgba(0,0,0,0.6);font-weight:400;letter-spacing:-0.268px;">Owner*</div>
<div class="t" style="left:509.70px;top:487.08px;font-size:20.58px;color:rgba(0,0,0,0.87);font-weight:400;letter-spacing:0.239px;">My New Customer</div>
<svg style="left:1385.00px;top:472.00px;width:30px;height:30px;" viewBox="0 0 24 24"><path fill="rgba(0,0,0,0.6)" d="M19 6.41L17.59 5 12 10.59 6.41 5 5 6.41 10.59 12 5 17.59 6.41 19 12 13.41 17.59 19 19 17.59 13.41 12z"/></svg>
<div class="a" style="left:487px;top:547px;width:946px;height:75px;border:3px solid #fcc53a;border-radius:8px;box-shadow:0 0 5px 1px rgba(252,197,58,.45)"></div>
<div class="a" style="left:490px;top:550px;width:940px;height:69px;background:#d2e7e4;border-radius:4px 4px 0 0;border-bottom:2px solid #00826c"></div>
<div class="t" style="left:510.70px;top:560.61px;font-size:15.94px;color:#00806f;font-weight:400;letter-spacing:0.000px;transform:scaleX(0.9561);transform-origin:0.00px 0;">Groups</div>
<div class="t" style="left:509.70px;top:585.28px;font-size:20.58px;color:rgba(0,0,0,0.87);font-weight:400;letter-spacing:0.114px;">My Devices</div>
<div class="a" style="left:617px;top:583px;width:1px;height:24px;background:#00806f"></div>
<div class="a" style="left:510px;top:610px;width:530px;height:99px;background:#fff;box-shadow:0 5px 5px -3px rgba(0,0,0,.2),0 8px 10px 1px rgba(0,0,0,.14),0 3px 14px 2px rgba(0,0,0,.12)"></div>
<div class="a" style="left:507px;top:609px;width:535px;height:103px;border:3px solid #fcc53a;border-top:none;border-radius:0 0 8px 8px;box-shadow:0 2px 5px 1px rgba(252,197,58,.45)"></div>
<div class="a" style="left:517px;top:617px;width:515px;height:83px;background:#f4f4f4;border:3px solid #fcc53a;border-radius:8px"></div>
<div class="t" style="left:530.00px;top:634.57px;font-size:21.30px;color:rgba(0,0,0,0.87);font-weight:400;letter-spacing:0.025px;">No entity groups matching 'My Devices' were found.</div>
<div class="t" style="left:530.00px;top:664.93px;font-size:20.87px;color:#0c70d2;font-weight:400;letter-spacing:-0.042px;">Create a new one!</div>
<div class="a" style="left:530px;top:686.5px;width:169px;height:1.3px;background:#2d55d0"></div>
<div class="t" style="left:1271.00px;top:700.82px;font-size:19.71px;color:#00695c;font-weight:400;letter-spacing:0.000px;transform:scaleX(0.9340);transform-origin:1.00px 0;-webkit-text-stroke:0.43px #00695c;">Cancel</div>
<div class="a" style="left:1351px;top:689px;width:99px;height:45px;border-radius:5px;background:#00695c;box-shadow:0 3px 1px -2px rgba(0,0,0,.2),0 2px 2px 0 rgba(0,0,0,.14),0 1px 5px 0 rgba(0,0,0,.12)"></div>
<div class="t" style="left:1370.00px;top:700.82px;font-size:19.71px;color:#ffffff;font-weight:400;letter-spacing:0.000px;transform:scaleX(0.9269);transform-origin:1.00px 0;-webkit-text-stroke:0.43px #ffffff;">Update</div>
<div class="a" style="left:121px;top:538px;width:313px;height:77px;background:#fdefdf;border:3px solid #fcc53a;border-radius:10px;box-shadow:0 0 4px rgba(252,197,58,.5)"></div>
<div class="t" style="left:128.00px;top:543.53px;font-size:28.55px;color:#000;font-weight:400;letter-spacing:-0.215px;">Input the desired device</div>
<div class="t" style="left:129.00px;top:575.93px;font-size:28.55px;color:#000;font-weight:400;letter-spacing:0.000px;transform:scaleX(0.9769);transform-origin:1.00px 0;">group name</div>
<div class="a" style="left:140px;top:506px;width:30px;height:35px;background:#fff;border:3px solid #fcc53a;border-radius:8px;box-shadow:0 0 4px rgba(252,197,58,.5)"></div>
<div class="t" style="left:146.70px;top:510.46px;font-size:27.10px;color:#000;font-weight:400;letter-spacing:0.000px;">5</div>
<div class="a" style="left:434px;top:576px;width:53px;height:3px;background:repeating-linear-gradient(90deg,#fcc53a 0 8px,transparent 8px 13px)"></div>
<div class="a" style="left:483px;top:572.5px;width:10px;height:10px;border-radius:5px;background:#fcc53a"></div>
<div class="a" style="left:803.5px;top:700px;width:3px;height:10.5px;background:#fcc53a"></div>
<div class="a" style="left:803.5px;top:716px;width:3px;height:21px;background:#fcc53a"></div>
<div class="a" style="left:803.5px;top:742px;width:3px;height:12px;background:#fcc53a"></div>
<div class="a" style="left:800px;top:695px;width:10px;height:10px;border-radius:5px;background:#fcc53a"></div>
<div class="a" style="left:698px;top:753px;width:325px;height:40px;background:#fdefdf;border:3px solid #fcc53a;border-radius:10px;box-shadow:0 0 4px rgba(252,197,58,.5)"></div>
<div class="t" style="left:706.20px;top:757.75px;font-size:27.83px;color:#000;font-weight:400;letter-spacing:0.091px;">Click "Create a new one"</div>
<div class="a" style="left:715px;top:721px;width:29px;height:33px;background:#fff;border:3px solid #fcc53a;border-radius:8px;box-shadow:0 0 4px rgba(252,197,58,.5)"></div>
<div class="t" style="left:720.60px;top:724.84px;font-size:27.25px;color:#000;font-weight:400;letter-spacing:0.000px;">6</div>
<svg style="left:590px;top:678px;width:30px;height:35px" viewBox="590 678 30 35">
<path d="M601.5 684 Q601.5 682.3 603 682.3 Q604.5 682.3 604.5 684 L604.5 687.5 L606.5 687.5 Q607.3 687.7 607.3 688.5 L609.5 688.5 Q610.3 688.8 610.3 689.5 L612 689.8 Q613.6 690.5 613.6 692 L613.6 697 L611.8 701.5 L611.8 703 L602.4 703 L602.4 701.5 L597.5 694.5 Q596.6 692.5 598.5 691.8 L600 691.8 L601.5 693.5 Z" fill="#fff" stroke="#000" stroke-width="1.1" stroke-linejoin="round"/>
<path d="M604.5 687.5V691.5M607.3 688.5V692M610.3 689.5V692.5" stroke="#000" stroke-width="1"/>
<rect x="602.4" y="703" width="9.4" height="5.5" fill="#fcc53a" stroke="#000" stroke-width="1.1"/>
<circle cx="609" cy="705.8" r="1" fill="#000"/>
</svg>
</body></html>
